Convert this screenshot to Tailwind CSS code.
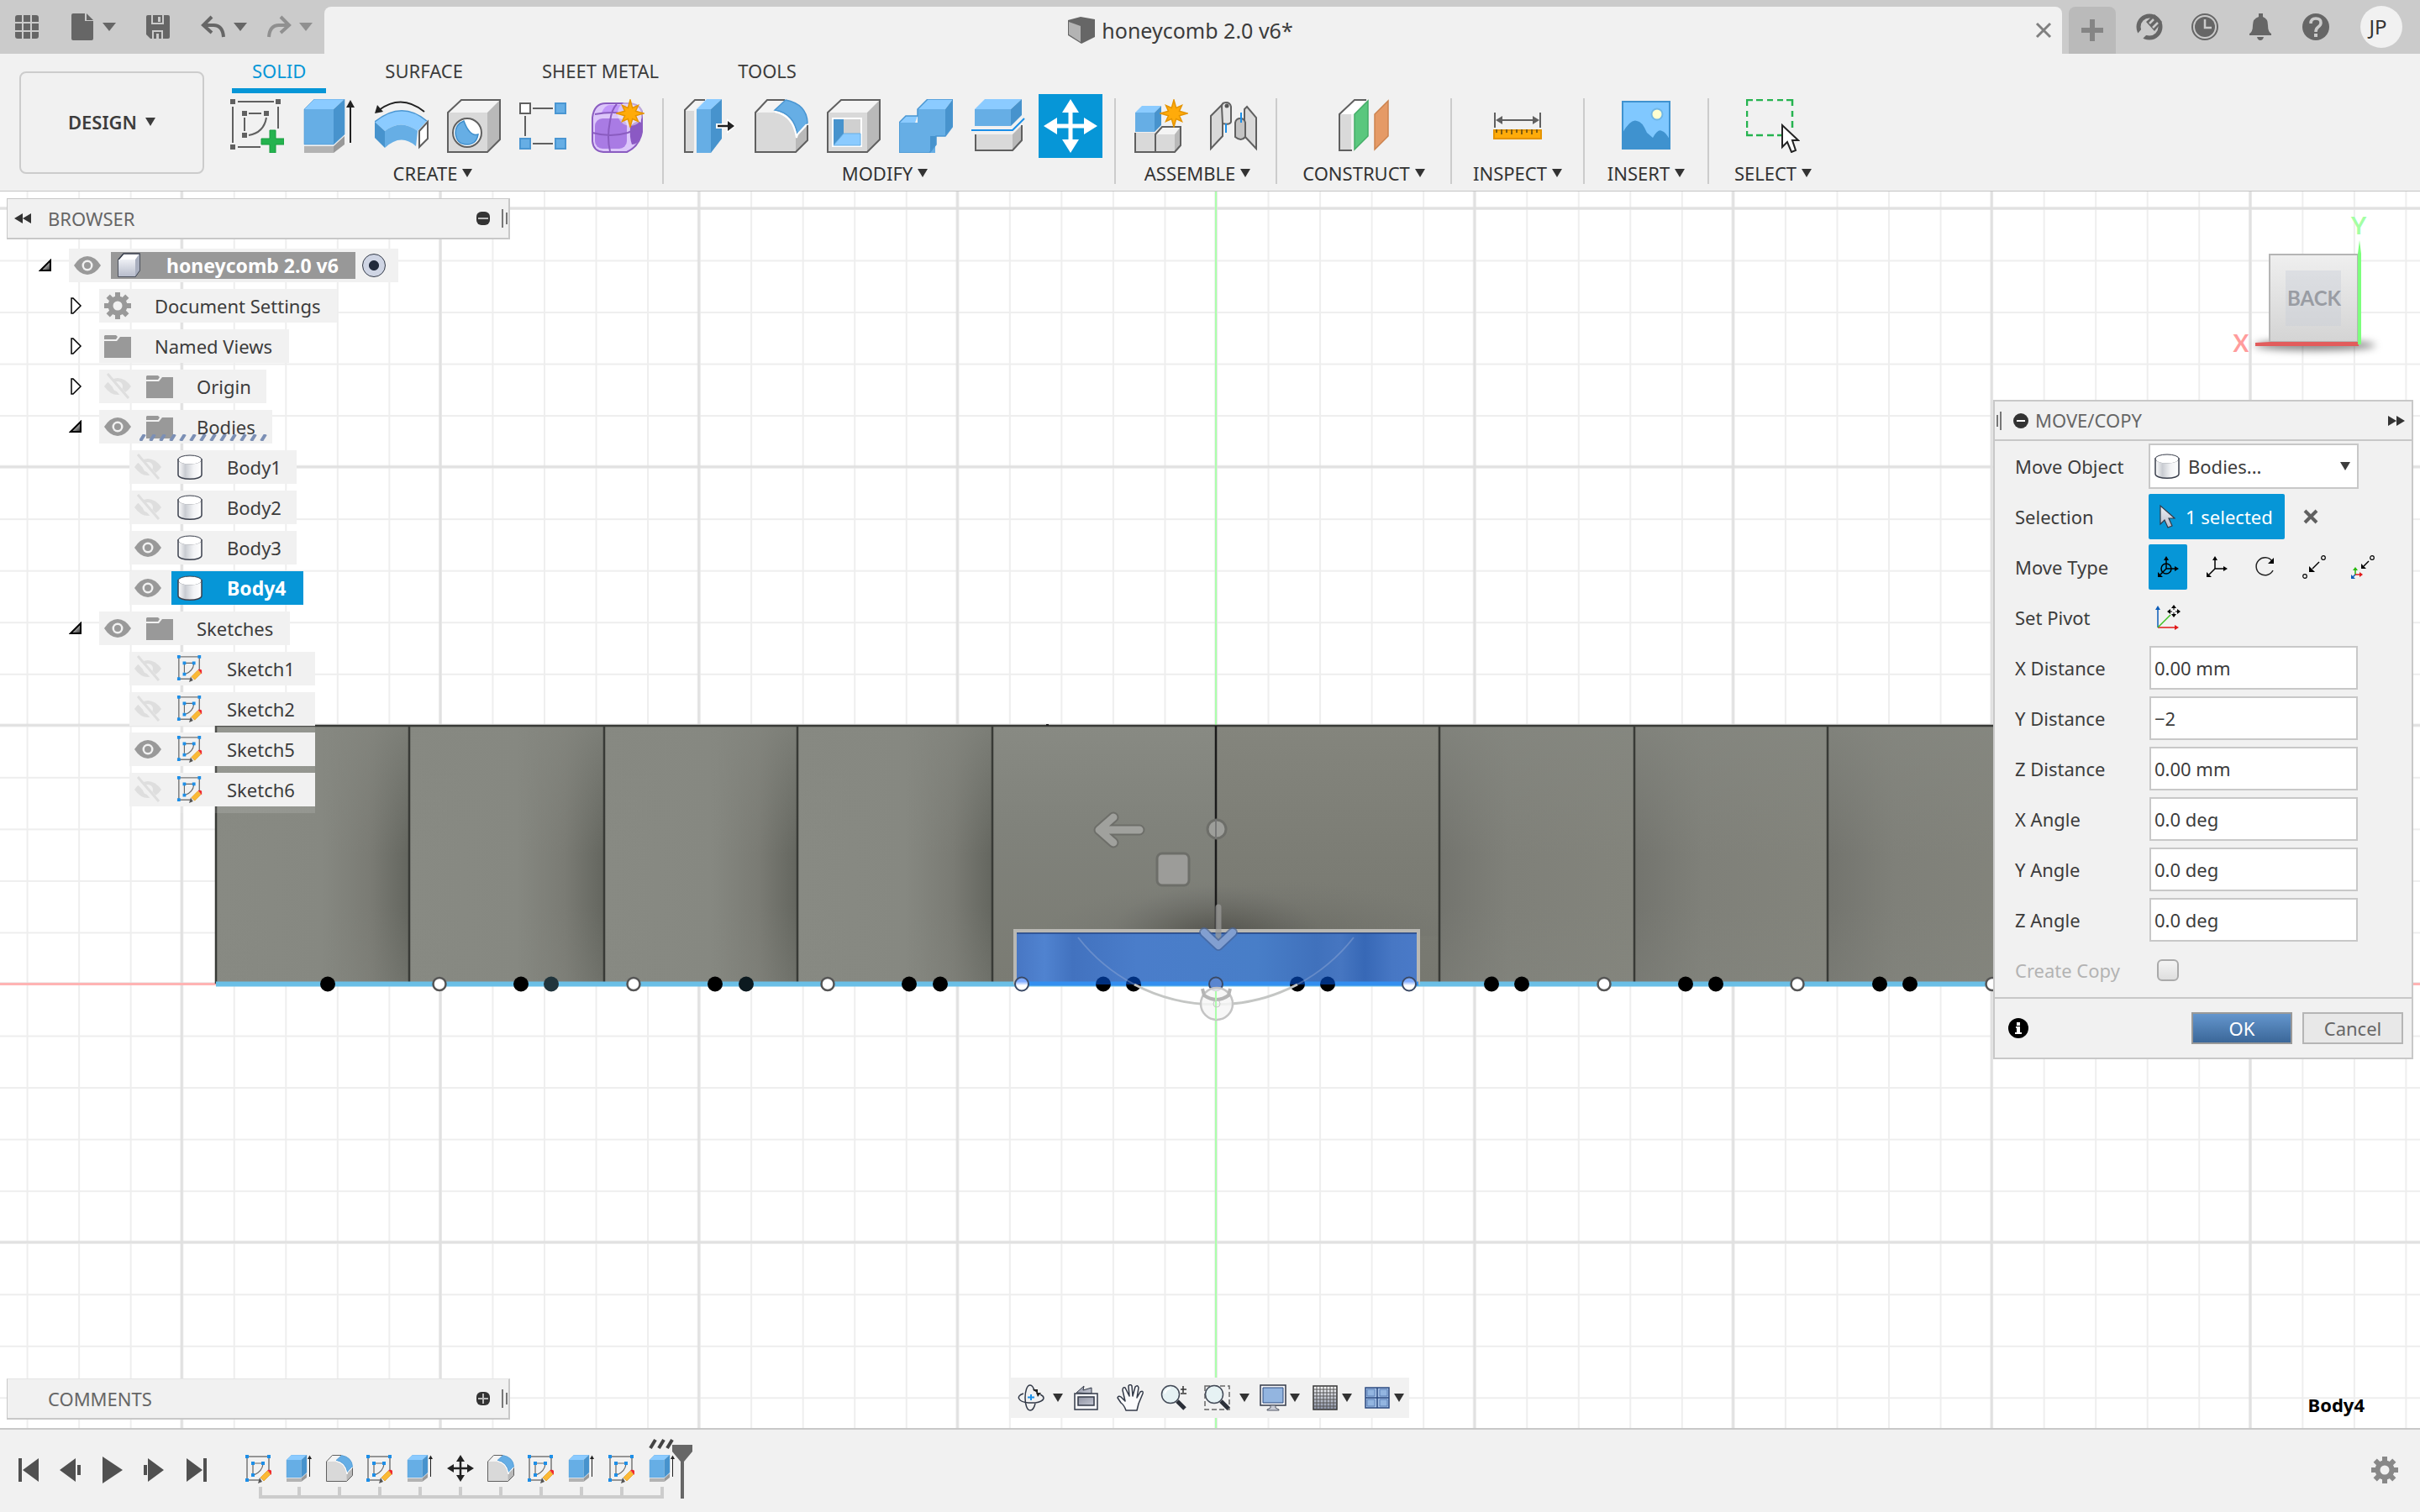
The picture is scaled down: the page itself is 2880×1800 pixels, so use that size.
<!DOCTYPE html>
<html lang="en">
<head>
  <meta charset="UTF-8" />
  <meta name="viewport" content="width=device-width, initial-scale=1.0" />
  <title>honeycomb 2.0 v6*</title>
  <script src="https://cdn.jsdelivr.net/npm/@tailwindcss/browser@4"></script>
</head>
<body class="h-screen flex flex-col overflow-hidden bg-white font-['Noto_Sans',sans-serif] text-[22px] leading-7 text-[#3c3c3c]">

  <!-- shared icons -->
  <svg class="absolute w-0 h-0">
    <linearGradient id="cyl" x1="0" x2="1"><stop offset="0" stop-color="#fff"/><stop offset=".3" stop-color="#c9ccd2"/><stop offset=".65" stop-color="#f2f3f5"/><stop offset="1" stop-color="#fff"/></linearGradient>
    <linearGradient id="steel" x1="0" y1="0" x2="0" y2="1"><stop offset="0" stop-color="#eef0f5"/><stop offset="1" stop-color="#b7bccb"/></linearGradient>
    <linearGradient id="steelDark" x1="0" y1="0" x2="1" y2="1"><stop offset="0" stop-color="#8f93a3"/><stop offset="1" stop-color="#c3c6d2"/></linearGradient>
    <linearGradient id="tri" x1="0" y1="0" x2="1" y2="1"><stop offset=".4" stop-color="#ccc"/><stop offset="1" stop-color="#222"/></linearGradient>
    <linearGradient id="gridFade" x1="0" y1="0" x2="0" y2="1"><stop offset="0" stop-color="#fff"/><stop offset="1" stop-color="#8b93a8"/></linearGradient>
    <symbol id="caret" viewBox="0 0 12 10"><path d="M0 0h12L6 10z" fill="currentColor"/></symbol>
    <symbol id="eye" viewBox="0 0 32 24"><path d="M0 12Q7 1 16 1t16 11q-7 11-16 11T0 12z" fill="#999"/><circle cx="16" cy="12" r="6.500" fill="#f1f1f1"/><circle cx="16" cy="12" r="4" fill="#999"/></symbol>
    <symbol id="eye-off" viewBox="0 0 32 32"><path d="M0 16Q7 6 16 6t16 10q-7 10-16 10T0 16z" fill="#dedede"/><circle cx="16" cy="16" r="6" fill="#f1f1f1"/><path d="M2 3l26 28" stroke="#f1f1f1" stroke-width="7"/><path d="M4 1l25 29" stroke="#dedede" stroke-width="3"/></symbol>
    <symbol id="folder" viewBox="0 0 32 32"><path d="M1 3h13l2 2-2 3H0V4z" fill="#999"/><path d="M0 10h15l4-5h13v25H0z" fill="#999"/></symbol>
    <symbol id="gear" viewBox="-16 -16 32 32"><g fill="currentColor"><path d="M-3-16h6v32h-6zM-16-3h32v6h-32z"/><path d="M-3-16h6v32h-6zM-16-3h32v6h-32z" transform="rotate(45)"/><circle r="11.500"/></g><circle r="5.500" fill="#f1f1f1"/></symbol>
    <symbol id="cylinder" viewBox="0 0 32 32"><path d="M2 7v18c0 7 28 7 28 0V7z" fill="url(#cyl)" stroke="#3a3f4c" stroke-width="1.500"/><ellipse cx="16" cy="7" rx="14" ry="5" fill="#fbfbfb" stroke="#3a3f4c" stroke-width="1"/><ellipse cx="16" cy="8" rx="13" ry="4.500" fill="#fff"/></symbol>
    <symbol id="open" viewBox="0 0 16 16"><path d="M2 14L14 2v12z" fill="url(#tri)" stroke="#000" stroke-width="2"/></symbol>
    <symbol id="closed" viewBox="0 0 16 22"><path d="M3 2h2l9 9-9 9H3z" fill="#fff" stroke="#000" stroke-width="1.500"/></symbol>
    <symbol id="sketch" viewBox="0 0 32 34">
      <path d="M3 2h25M2 3v27M28 3v16M3 30h15" fill="none" stroke="#777" stroke-width="1.500"/>
      <path d="M9 11v11M9 10h12M21 11q-1 9-11 13" fill="none" stroke="#666" stroke-width="1.200"/>
      <path d="M0 0h4v4H0zM26 0h4v4h-4zM0 28h4v4H0zM7 8h4v4H7zM19 8h4v4h-4zM7 22h4v4H7z" fill="#1d8fe8"/>
      <path d="M17 27l3 5-5 2z" fill="#555"/><path d="M18 27l8-8 4 4-8 8z" fill="#fbb935" stroke="#e09a1c" stroke-width=".700"/><path d="M26 18q4-1 5 1v5z" fill="#f0292e"/>
    </symbol>
    <symbol id="star" viewBox="-17 -17 34 34"><path d="M0-16 2.700-6.500 9.500-9.500 6.500-2.700 16 0 6.500 2.700 9.500 9.500 2.700 6.500 0 16-2.700 6.500-9.500 9.500-6.500 2.700-16 0-6.500-2.700-9.500-9.500-2.700-6.500z" fill="#ffab0a" stroke="#e59400" stroke-width="1.500"/></symbol>
    <symbol id="extrude" viewBox="0 0 64 64">
      <path d="M2 12h35v42H2z" fill="#66aee5"/><path d="M2 12L14 0h36L37 12z" fill="#8bcbff"/><path d="M37 12L50 0v42L37 54z" fill="#4793cd"/>
      <path d="M2 12L14 0h36v42L37 54H2z" fill="none" stroke="#4a96d2" stroke-opacity=".6"/>
      <path d="M2 56h35v8H2z" fill="#b3b3b3"/><path d="M37 56l13-12v10L37 64z" fill="#999"/>
      <path d="M57 52V8" stroke="#222" stroke-width="2"/><path d="M52 10l5-9 5 9z" fill="#222"/>
    </symbol>
    <symbol id="fillet" viewBox="0 0 64 64">
      <path d="M1 16L15 1h21L24 14z" fill="#f4f4f4"/><path d="M1 16h23q22 5 26 30l-1 17H1z" fill="#d9d9d9"/><path d="M49 46l14-15v18L49 63z" fill="#b9b9b9"/>
      <path d="M36 1H15L1 16v47h48l14-14V31" fill="none" stroke="#606060" stroke-width="2"/>
      <path d="M24 13L37 1q25 5 26 27L51 42Q47 17 24 13z" fill="#66aee5" stroke="#4a96d2" stroke-width="1.500"/><path d="M24 15q22 4 26 31l1-4L62 30" fill="none" stroke="#fff" stroke-width="2"/>
    </symbol>
    <symbol id="move" viewBox="-32 -32 64 64"><g fill="currentColor"><path d="M-2.500-18h5v36h-5zM-18-2.500h36v5h-36z"/><path d="M0-32l10 16h-20zM0 32l10-16h-20zM-32 0l16-10v20zM32 0L16-10v20z"/></g></symbol>
  </svg>

  <!-- title bar -->
  <header class="h-16 shrink-0 bg-[#cbcbcb] flex items-stretch text-[#666]">
    <div class="w-[386px] flex items-center pl-4">
      <button aria-label="Data panel" class="w-8"><svg class="w-8 h-8" viewBox="0 0 32 32"><path d="M2 5q0-3 3-3h5v8H2zM12 2h8v8h-8zM22 2h5q3 0 3 3v5h-8zM2 12h8v8H2zM12 12h8v8h-8zM22 12h8v8h-8zM2 22h8v8H5q-3 0-3-3zM12 22h8v8h-8zM22 22h8v5q0 3-3 3h-5z" fill="currentColor"/></svg></button>
      <button aria-label="File" class="ml-[34px] flex items-center gap-2"><svg class="w-8 h-8" viewBox="0 0 32 32"><path d="M5 0h14v9h10v21q0 2-2 2H5q-2 0-2-2V2q0-2 2-2z" fill="currentColor"/><path d="M21 0l8 8h-8z" fill="currentColor"/></svg><svg class="w-4 h-[10px]" viewBox="0 0 16 10"><path d="M0 0h16L8 10z" fill="currentColor"/></svg></button>
      <button aria-label="Save" class="ml-[34px]"><svg class="w-8 h-8" viewBox="0 0 32 32"><path d="M2 4q0-2 2-2h24q2 0 2 2v24q0 2-2 2H7l-5-5z" fill="currentColor"/><path d="M9 2v10h13V2M10 30v-9h11v9" fill="none" stroke="#cbcbcb" stroke-width="2"/><path d="M14 24h3v6h-3z" fill="#cbcbcb"/><path d="M16 4h3v6h-3z" fill="#cbcbcb"/></svg></button>
      <button aria-label="Undo" class="ml-[34px] flex items-center gap-2"><svg class="w-8 h-8" viewBox="0 0 32 32"><path d="M14 4L4 14l10 9M4 14h12q11 0 12 14" fill="none" stroke="currentColor" stroke-width="4"/></svg><svg class="w-4 h-[10px]" viewBox="0 0 16 10"><path d="M0 0h16L8 10z" fill="currentColor"/></svg></button>
      <button aria-label="Redo" class="ml-[22px] flex items-center gap-2 text-[#909090]"><svg class="w-8 h-8" viewBox="0 0 32 32"><path d="M18 4l10 10-10 9M28 14H16Q5 14 4 28" fill="none" stroke="currentColor" stroke-width="4"/></svg><svg class="w-4 h-[10px]" viewBox="0 0 16 10"><path d="M0 0h16L8 10z" fill="currentColor"/></svg></button>
    </div>
    <div class="flex-1 mt-2 bg-[#f1f1f1] rounded-t-lg flex items-center">
      <div class="flex-1 flex items-center justify-center gap-1.5 text-[25px] text-[#3c3c3c]">
        <svg class="w-9 h-9" viewBox="0 0 36 36"><path d="M2 6l15-4 17 3v21L18 34 2 24z" fill="#666"/><path d="M3 8l14 5v19L3 23z" fill="#b3b3b3"/></svg>
        <h1>honeycomb 2.0 v6*</h1>
      </div>
      <button aria-label="Close tab" class="mr-3"><svg class="w-5 h-5" viewBox="0 0 20 20"><path d="M2 2l16 16M18 2L2 18" stroke="#808080" stroke-width="3"/></svg></button>
    </div>
    <button aria-label="New tab" class="ml-2 mt-2 w-14 bg-[#bababa] rounded-t-lg flex items-center justify-center"><svg class="w-[26px] h-[26px]" viewBox="0 0 26 26"><path d="M13 0v26M0 13h26" stroke="#858585" stroke-width="6"/></svg></button>
    <div class="flex items-center gap-[34px] pl-6 pr-[21px]">
      <button aria-label="Extensions"><svg class="w-8 h-8" viewBox="0 0 32 32"><circle cx="16" cy="16" r="13" fill="none" stroke="currentColor" stroke-width="5"/><path d="M1 27l6-7 3 3-6 8z" fill="#cbcbcb"/><path d="M1 25l7-8q-2-8 6-9l9 10q-2 7-9 6l-7 7z" fill="#cbcbcb"/><path d="M8 18q0-6 6-10L25 20q-5 6-12 4l-5 3q-4 1-3-3z" fill="#cbcbcb"/><path d="M12 10L22 1l9 9-9 11z" fill="currentColor"/><path d="M16 12l5-5M20 17l6-6" stroke="#cbcbcb" stroke-width="2.500"/></svg></button>
      <button aria-label="Job status"><svg class="w-8 h-8" viewBox="0 0 32 32"><circle cx="16" cy="16" r="15" fill="none" stroke="currentColor" stroke-width="2"/><circle cx="16" cy="16" r="12" fill="currentColor"/><path d="M16 7v10h8" fill="none" stroke="#cbcbcb" stroke-width="2.500"/></svg></button>
      <button aria-label="Notifications"><svg class="w-8 h-8" viewBox="0 0 32 32"><path d="M14 0h5v4q6 2 6 10 0 8 4 10v2H3v-2q4-2 4-10 0-8 7-10zM12 28h8q-1 4-4 4t-4-4z" fill="currentColor"/></svg></button>
      <button aria-label="Help"><svg class="w-8 h-8" viewBox="0 0 32 32"><circle cx="16" cy="16" r="16" fill="currentColor"/><path d="M10 12q0-6 6-6t6 5q0 3-3 5-3 2-3 6" fill="none" stroke="#cbcbcb" stroke-width="3.500"/><path d="M14 24h4v4h-4z" fill="#cbcbcb"/></svg></button>
      <button class="ml-[3px] pr-2 w-[50px] h-[50px] rounded-full bg-[#f1f1f1] text-2xl text-[#333]">JP</button>
    </div>
  </header>

  <!-- ribbon -->
  <div class="h-[164px] shrink-0 bg-[#f1f1f1] border-b border-[#c4c4c4] flex">
    <button class="ml-[23px] mt-[21px] w-[220px] h-[122px] pb-0.5 border-2 border-[#ccc] rounded-lg font-semibold flex items-center justify-center gap-2.5">DESIGN <svg class="w-3 h-2.5"><use href="#caret"/></svg></button>
    <div class="ml-[19px]">
      <nav class="h-12 flex gap-[46px] pl-3.5">
        <a href="#" class="h-[47px] px-6 pt-1.5 border-b-6 border-[#0696d7] text-[#0696d7]">SOLID</a>
        <a href="#" class="h-[47px] px-6 pt-1.5">SURFACE</a>
        <a href="#" class="h-[47px] px-6 pt-1.5">SHEET METAL</a>
        <a href="#" class="h-[47px] px-6 pt-1.5">TOOLS</a>
      </nav>
      <div class="flex text-[#333]">
        <section class="pl-[6px] pr-3.5">
          <div class="flex gap-2.5">
            <button aria-label="Create sketch" class="w-[76px] h-[76px] p-1.5"><svg viewBox="0 0 64 64">
              <g fill="none" stroke="#606060" stroke-width="2"><path d="M9 3h43M3 9v43M57 9v26M9 57h27M22 17h15M17 22v16M43 22q-3 18-21 21"/></g>
              <path d="M0 0h6v6H0zM54 0h6v6h-6zM0 54h6v6H0zM14 14h6v6h-6zM40 14h6v6h-6zM14 40h6v6h-6z" fill="#606060"/>
              <path d="M47 37h7v10h10v7H54v10h-7V54H37v-7h10z" fill="#25b34f" stroke="#179c3f"/></svg></button>
            <button aria-label="Extrude" class="w-[76px] h-[76px] p-1.5"><svg viewBox="0 0 64 64"><use href="#extrude"/></svg></button>
            <button aria-label="Revolve" class="w-[76px] h-[76px] p-1.5"><svg viewBox="0 0 64 64">
              <path d="M59 15Q32-7 5 13" fill="none" stroke="#222" stroke-width="2"/><path d="M0 17L3 7l7 8z" fill="#222"/>
              <path d="M0 27Q32 1 62 26L51 38Q31 23 12 38z" fill="#8bcbff"/><path d="M0 27l12 11v20L0 46z" fill="#4793cd"/><path d="M12 38Q31 23 51 38l-2 18Q31 40 12 58z" fill="#66aee5"/>
              <path d="M0 27Q32 1 62 26" fill="none" stroke="#4a96d2" stroke-width="1.500"/><path d="M53 38l10-11v20L53 57z" fill="#fff" stroke="#606060" stroke-width="2"/></svg></button>
            <button aria-label="Hole" class="w-[76px] h-[76px] p-1.5"><svg viewBox="0 0 64 64">
              <path d="M1 16L17 1h46L48 16z" fill="#f4f4f4"/><path d="M1 16h47v47H1z" fill="#d9d9d9"/><path d="M48 16L63 1v47L48 63z" fill="#b9b9b9"/><path d="M1 16L17 1h46v47L48 63H1z" fill="none" stroke="#606060" stroke-width="2"/>
              <circle cx="24" cy="40" r="17" fill="#fff" stroke="#606060" stroke-width="2"/><path d="M20 26Q10 30 10 40q1 14 14 14 11 0 13-12-10 3-17-16z" fill="#66aee5" stroke="#3f8ecb" stroke-width="1.500"/></svg></button>
            <button aria-label="Pattern" class="w-[76px] h-[76px] p-1.5"><svg viewBox="0 0 64 64">
              <path d="M16 11h24M7 20v24M16 53h24" stroke="#606060" stroke-width="2"/><path d="M1 5h12v12H1z" fill="#fff" stroke="#606060" stroke-width="2"/>
              <path d="M43 5h12v12H43zM1 47h12v12H1zM43 47h12v12H43z" fill="#66aee5" stroke="#4a96d2" stroke-width="2"/></svg></button>
            <button aria-label="Create form" class="w-[76px] h-[76px] p-1.5"><svg viewBox="0 0 64 64">
              <path d="M1 22Q3 5 17 5h26q14 0 17 10v24Q57 56 42 63H14Q2 62 1 50z" fill="#dcc6fa" stroke="#8a5cc0" stroke-width="2"/>
              <path d="M12 16Q16 7 22 7h20l-6 10z" fill="#c195fa"/><rect x="4" y="23" width="38" height="36" rx="9" fill="#a97be4"/><path d="M46 32q8-8 13-4v16q-4 10-11 10-3-8-2-22z" fill="#8b59c4"/>
              <path d="M22 62q-4-16 0-36 2-14 8-20M1 40q22 6 42 0 12-4 17-12M4 18q22-4 42 0" fill="none" stroke="#8a5cc0" stroke-width="2"/>
              <circle cx="46" cy="17" r="15" fill="#f1f1f1" fill-opacity=".5"/><use href="#star" x="29" y="0" width="34" height="34"/></svg></button>
          </div>
          <button class="mt-1 w-full pr-3 flex items-center justify-center gap-1.5 leading-7">CREATE <svg class="w-3 h-2.5"><use href="#caret"/></svg></button>
        </section>
        <div class="w-0.5 h-[102px] mt-[5px] bg-[#ccc]"></div>
        <section class="pl-4 pr-3.5">
          <div class="flex gap-2.5">
            <button aria-label="Press pull" class="w-[76px] h-[76px] p-1.5"><svg viewBox="0 0 64 64">
              <path d="M3 14h11v49H3z" fill="#d9d9d9"/><path d="M3 13L15 1h11L14 13z" fill="#f4f4f4"/><path d="M13 63H3V13L15 1h12" fill="none" stroke="#606060" stroke-width="2"/>
              <path d="M17 12h17v52H17z" fill="#66aee5"/><path d="M17 12L29 0h18L34 12z" fill="#8bcbff"/><path d="M34 12L47 0v47L34 64z" fill="#4793cd"/>
              <path d="M40 29h13v-6l11 9-11 9v-6H40z" fill="#fff"/><path d="M42 32h13" stroke="#222" stroke-width="2.500"/><path d="M54 26l8 6-8 6z" fill="#222"/></svg></button>
            <button aria-label="Fillet" class="w-[76px] h-[76px] p-1.5"><svg viewBox="0 0 64 64"><use href="#fillet"/></svg></button>
            <button aria-label="Shell" class="w-[76px] h-[76px] p-1.5"><svg viewBox="0 0 64 64">
              <path d="M1 16L17 1h46L48 16z" fill="#f4f4f4"/><path d="M1 16h47v47H1z" fill="#d9d9d9"/><path d="M48 16L63 1v47L48 63z" fill="#b9b9b9"/><path d="M1 16L17 1h46v47L48 63H1z" fill="none" stroke="#606060" stroke-width="2"/>
              <path d="M6 22h36v35H6z" fill="#fff"/><path d="M20 24h20v18H20z" fill="#d0d0d0"/><path d="M8 24h12v18L8 55z" fill="#4793cd"/><path d="M8 55l12-14h20v14z" fill="#8bcbff" stroke="#66aee5"/></svg></button>
            <button aria-label="Combine" class="w-[76px] h-[76px] p-1.5"><svg viewBox="0 0 64 64">
              <path d="M0 28h22V12h34v32H43v20H0z" fill="#66aee5"/><path d="M22 12L34 0h30l-9 12zM0 28l8-8h14l-3 8z" fill="#8bcbff"/><path d="M55 12l9-12v32l-9 12zM37 44h7v10l-7 10z" fill="#4793cd"/>
              <path d="M0 28l8-8h14v-8L34 0h30v32l-9 12H44v10l-8 10H0z" fill="none" stroke="#4a96d2" stroke-width="1.500"/></svg></button>
            <button aria-label="Split body" class="w-[76px] h-[76px] p-1.5"><svg viewBox="0 0 64 64">
              <path d="M4 12h43v20H4z" fill="#66aee5"/><path d="M4 12L16 0h44L47 12z" fill="#8bcbff"/><path d="M47 12L60 0v19L47 32z" fill="#4793cd"/>
              <path d="M0 37h49l14-14" fill="none" stroke="#1b8fe8" stroke-width="2"/><path d="M5 42h44v19H5z" fill="#d9d9d9"/><path d="M49 42l11-11v18L49 61z" fill="#b9b9b9"/><path d="M5 42v19h44l11-12V31" fill="none" stroke="#606060" stroke-width="2"/></svg></button>
            <button aria-label="Move" class="w-[76px] h-[76px] p-1.5 bg-[#0696d7] text-white"><svg viewBox="0 0 64 64"><use href="#move"/></svg></button>
          </div>
          <button class="mt-1 w-full pr-3 flex items-center justify-center gap-1.5 leading-7">MODIFY <svg class="w-3 h-2.5"><use href="#caret"/></svg></button>
        </section>
        <div class="w-0.5 h-[102px] mt-[5px] bg-[#ccc]"></div>
        <section class="pl-4 pr-3">
          <div class="flex gap-2.5">
            <button aria-label="New component" class="w-[76px] h-[76px] p-1.5"><svg viewBox="0 0 64 64">
              <path d="M1 40h24v23H1zM25 42h23v21H25z" fill="#d9d9d9"/><path d="M25 42l8-9h22l-7 9z" fill="#f4f4f4"/><path d="M48 42l7-9v22l-7 8z" fill="#b9b9b9"/><path d="M1 40v23h47l7-8V33H33l-8 9v21" fill="none" stroke="#606060" stroke-width="2"/>
              <path d="M1 16h23v23H1z" fill="#66aee5"/><path d="M1 16l8-8h23l-8 8z" fill="#8bcbff"/><path d="M24 16l8-8v23l-8 8z" fill="#4793cd"/><circle cx="47" cy="17" r="13" fill="#f1f1f1"/><use href="#star" x="30" y="0" width="34" height="34"/></svg></button>
            <button aria-label="Joint" class="w-[76px] h-[76px] p-1.5"><svg viewBox="0 0 64 64">
              <path d="M5 20L19 6v38L5 59z" fill="#d9d9d9" stroke="#606060" stroke-width="2"/><path d="M18 9q0-5 5-5t6 5v18q-1 4-10 2z" fill="#e4e4e4" stroke="#606060" stroke-width="2"/><circle cx="24" cy="8" r="2.500" fill="#555"/><path d="M23 29v11" stroke="#1b8fe8" stroke-width="2"/>
              <path d="M45 12l3-3 11 13v37L45 44z" fill="#d9d9d9" stroke="#606060" stroke-width="2"/><path d="M34 28q1-5 6-5t6 5v17q-5 6-12 0z" fill="#c4c4c4" stroke="#606060" stroke-width="2"/><path d="M41 16v12" stroke="#1b8fe8" stroke-width="2"/></svg></button>
          </div>
          <button class="mt-1 w-full flex items-center justify-center gap-1.5 leading-7">ASSEMBLE <svg class="w-3 h-2.5"><use href="#caret"/></svg></button>
        </section>
        <div class="w-0.5 h-[102px] mt-[5px] bg-[#ccc]"></div>
        <section class="w-[206px] flex flex-col items-center">
          <button aria-label="Offset plane" class="w-[76px] h-[76px] p-1.5"><svg viewBox="0 0 64 64">
            <path d="M3 18h14v43H3z" fill="#d9d9d9"/><path d="M3 18L21 1h14L20 18z" fill="#fff"/><path d="M18 61H3V18L21 1h14" fill="none" stroke="#606060" stroke-width="2"/>
            <path d="M21 18L37 2v42L21 60z" fill="#5ac77e" stroke="#43ad67" stroke-width="1.500"/><path d="M45 18L61 2v42L45 60z" fill="#e59a66" stroke="#cb834f" stroke-width="1.500"/></svg></button>
          <button class="mt-1 flex items-center gap-1.5 leading-7">CONSTRUCT <svg class="w-3 h-2.5"><use href="#caret"/></svg></button>
        </section>
        <div class="w-0.5 h-[102px] mt-[5px] bg-[#ccc]"></div>
        <section class="w-[156px] flex flex-col items-center">
          <button aria-label="Measure" class="w-[76px] h-[76px] p-1.5"><svg viewBox="0 0 64 64">
            <path d="M5 16v18M59 16v18M10 25h44" stroke="#606060" stroke-width="2"/><path d="M6 25l8-5v10zM58 25l-8-5v10z" fill="#606060"/>
            <path d="M4 37h56v10H4z" fill="#ffab0a" stroke="#e59400" stroke-width="2"/><path d="M7 36v4M13 36v6M19 36v4M25 36v6M31 36v4M37 36v6M43 36v4M49 36v6M55 36v4" stroke="#805c10" stroke-width="2"/></svg></button>
          <button class="mt-1 flex items-center gap-1.5 leading-7">INSPECT <svg class="w-3 h-2.5"><use href="#caret"/></svg></button>
        </section>
        <div class="w-0.5 h-[102px] mt-[5px] bg-[#ccc]"></div>
        <section class="w-[146px] flex flex-col items-center">
          <button aria-label="Insert canvas" class="w-[76px] h-[76px] p-1.5"><svg viewBox="0 0 64 64">
            <path d="M4 3h56v56H4z" fill="#80c8ff" stroke="#3f92cf" stroke-width="2"/><circle cx="45" cy="18" r="6.500" fill="#ffffd0" stroke="#70b6e6" stroke-width="2"/><path d="M4 40q10-17 17-14 6 0 12 14l7 6q6-11 11-8 4 1 9 10v11H4z" fill="#3f92cf"/></svg></button>
          <button class="mt-1 flex items-center gap-1.5 leading-7">INSERT <svg class="w-3 h-2.5"><use href="#caret"/></svg></button>
        </section>
        <div class="w-0.5 h-[102px] mt-[5px] bg-[#ccc]"></div>
        <section class="w-[152px] flex flex-col items-center">
          <button aria-label="Select" class="w-[76px] h-[76px] p-1.5"><svg viewBox="0 0 64 64">
            <path d="M8 1H1v7M1 14v7M1 26v8M1 38v5h7M12 1h8M25 1h7M37 1h7M48 1h7v7M55 14v7M55 26v8M12 43h8M25 43h8M37 43h5" fill="none" stroke="#25b34f" stroke-width="2.500"/>
            <path d="M43 31v26l6-6 5 12 5-2-4-12h7z" fill="#fff" stroke="#222" stroke-width="2"/></svg></button>
          <button class="mt-1 flex items-center gap-1.5 leading-7">SELECT <svg class="w-3 h-2.5"><use href="#caret"/></svg></button>
        </section>
      </div>
    </div>
  </div>

  <!-- viewport -->
  <main class="flex-1 relative overflow-hidden">
    <svg class="absolute inset-0 w-full h-full" viewBox="0 228 2880 1472" preserveAspectRatio="xMidYMid slice">
      <defs>
        <pattern id="minor" x="1447" y="1171" width="61.540" height="61.540" patternUnits="userSpaceOnUse"><path d="M0 0h61.540M0 0v61.540" stroke="#eeeeee" stroke-width="4"/></pattern>
        <pattern id="major" x="1445" y="1169" width="307.700" height="307.700" patternUnits="userSpaceOnUse"><path d="M0 2h308M2 0v308" stroke="#e0e0e0" stroke-width="3"/></pattern>
        <linearGradient id="cellL" x1="0" x2="1"><stop offset="0" stop-color="#888a83"/><stop offset=".55" stop-color="#868881"/><stop offset=".8" stop-color="#7a7b74"/><stop offset="1" stop-color="#64665f"/></linearGradient>
        <linearGradient id="cellR" x1="0" x2="1"><stop offset="0" stop-color="#73746e"/><stop offset=".35" stop-color="#7f8079"/><stop offset="1" stop-color="#83847c"/></linearGradient>
        <linearGradient id="topFade" x1="0" y1="0" x2="0" y2="1"><stop offset="0" stop-color="#868881" stop-opacity=".7"/><stop offset=".5" stop-color="#868881" stop-opacity="0"/><stop offset=".7" stop-color="#868881" stop-opacity="0"/><stop offset="1" stop-color="#868881" stop-opacity=".3"/></linearGradient>
        <linearGradient id="midL" x1="0" y1="0" x2="0" y2="1"><stop offset="0" stop-color="#888a83"/><stop offset=".4" stop-color="#80827b"/><stop offset="1" stop-color="#7a7b73"/></linearGradient>
        <linearGradient id="midR" x1="0" y1="0" x2="0" y2="1"><stop offset="0" stop-color="#84857d"/><stop offset=".5" stop-color="#7c7d75"/><stop offset="1" stop-color="#777870"/></linearGradient>
        <radialGradient id="dark"><stop offset="0" stop-color="#4a4a45" stop-opacity=".9"/><stop offset=".5" stop-color="#55554f" stop-opacity=".4"/><stop offset="1" stop-color="#666" stop-opacity="0"/></radialGradient>
        <linearGradient id="blue" x1="0" x2="1"><stop offset="0" stop-color="#4877c4"/><stop offset=".07" stop-color="#5083d0"/><stop offset=".14" stop-color="#4272bf"/><stop offset=".3" stop-color="#4a7dca"/><stop offset=".6" stop-color="#487ec8"/><stop offset=".75" stop-color="#4071bc"/><stop offset=".81" stop-color="#4676c1"/><stop offset=".87" stop-color="#3768b6"/><stop offset=".94" stop-color="#4777c4"/><stop offset="1" stop-color="#4a7ac8"/></linearGradient>
        <linearGradient id="halfDot" x1="0" y1="0" x2="0" y2="1"><stop offset=".5" stop-color="#00307f"/><stop offset=".5" stop-color="#000"/></linearGradient>
        <linearGradient id="halfOpen" x1="0" y1="0" x2="0" y2="1"><stop offset=".3" stop-color="#7fabff"/><stop offset=".6" stop-color="#fff"/></linearGradient>
        <linearGradient id="cube" x1="0" y1="0" x2="0" y2="1"><stop offset="0" stop-color="#efefef"/><stop offset="1" stop-color="#d4d4d4"/></linearGradient>
        <filter id="soft" x="-20%" y="-100%" width="140%" height="300%"><feGaussianBlur stdDeviation="5"/></filter>
      </defs>
      <rect y="228" width="2880" height="1472" fill="url(#minor)"/>
      <rect y="228" width="2880" height="1472" fill="url(#major)"/>
      <path d="M0 1171.500h2880" stroke="#ffb3b3" stroke-width="3"/>
      <path d="M1447 228v1472" stroke="#acffac" stroke-width="2"/>

      <!-- body faces -->
      <rect x="257" y="864" width="230" height="307" fill="url(#cellL)"/><rect x="487" y="864" width="232" height="307" fill="url(#cellL)"/><rect x="719" y="864" width="230" height="307" fill="url(#cellL)"/><rect x="949" y="864" width="232" height="307" fill="url(#cellL)"/>
      <rect x="1181" y="864" width="266" height="307" fill="url(#midL)"/><rect x="1447" y="864" width="266" height="307" fill="url(#midR)"/>
      <rect x="1713" y="864" width="232" height="307" fill="url(#cellR)"/><rect x="1945" y="864" width="230" height="307" fill="url(#cellR)"/><rect x="2175" y="864" width="230" height="307" fill="url(#cellR)"/>
      <path d="M257 864h924v307H257zM1713 864h692v307h-692z" fill="url(#topFade)"/>
      <svg x="1181" y="864" width="532" height="250" viewBox="1181 864 532 250"><ellipse cx="1447" cy="1120" rx="130" ry="66" fill="url(#dark)"/><ellipse cx="1490" cy="1125" rx="260" ry="80" fill="url(#dark)" opacity=".5"/></svg>
      <path d="M257 1171V864h2148M487 864v307M719 864v307M949 864v307M1181 864v307M1713 864v307M1945 864v307M2175 864v307" fill="none" stroke="#383a36" stroke-width="2.500"/>
      <path d="M1447 864v246" stroke="#1a1a1a" stroke-width="2.500"/>
      <path d="M1245 862h3v2h-3z" fill="#222"/>
      <path d="M257 1171.500h2148" stroke="#6abfe6" stroke-width="6"/>

      <!-- selected body -->
      <path d="M1208 1172v-64h480v64" fill="none" stroke="#b9b8b3" stroke-width="4"/>
      <rect x="1210" y="1111" width="476" height="59" fill="url(#blue)"/>
      <path d="M1210 1111h476" stroke="#244a90" stroke-width="1.500"/>
      <path d="M1208 1171h480" stroke="#338ff0" stroke-width="5"/>

      <!-- sketch points -->
      <g fill="#000"><circle cx="390" cy="1171.500" r="9"/><circle cx="620" cy="1171.500" r="9"/><circle cx="656" cy="1171.500" r="9" fill="#20343c"/><circle cx="851" cy="1171.500" r="9"/><circle cx="888" cy="1171.500" r="9" fill="#0c1a20"/><circle cx="1082" cy="1171.500" r="9"/><circle cx="1119" cy="1171.500" r="9"/><circle cx="1775" cy="1171.500" r="9"/><circle cx="1811" cy="1171.500" r="9"/><circle cx="2006" cy="1171.500" r="9"/><circle cx="2042" cy="1171.500" r="9"/><circle cx="2237" cy="1171.500" r="9"/><circle cx="2273" cy="1171.500" r="9"/></g>
      <g fill="url(#halfDot)"><circle cx="1313" cy="1171.500" r="9"/><circle cx="1349" cy="1171.500" r="9"/><circle cx="1544" cy="1171.500" r="9"/><circle cx="1580" cy="1171.500" r="9"/></g>
      <g fill="#fff" stroke="#555" stroke-width="2.500"><circle cx="523" cy="1171.500" r="7.500"/><circle cx="754" cy="1171.500" r="7.500"/><circle cx="985" cy="1171.500" r="7.500"/><circle cx="1909" cy="1171.500" r="7.500"/><circle cx="2139" cy="1171.500" r="7.500"/><circle cx="2371" cy="1171.500" r="7.500"/></g>
      <g fill="url(#halfOpen)" stroke="#3b4a66" stroke-width="2"><circle cx="1216" cy="1171.500" r="8"/><circle cx="1677" cy="1171.500" r="8"/><circle cx="1447" cy="1171.500" r="8" fill="#5a86d0"/></g>

      <!-- manipulator -->
      <path d="M1283 1116A209 209 0 0 0 1350 1172M1544 1172A209 209 0 0 0 1611 1116" fill="none" stroke="#9db2da" stroke-opacity=".4" stroke-width="2"/>
      <path d="M1350 1172A209 209 0 0 0 1544 1172" fill="none" stroke="#c4c6c4" stroke-width="3"/>
      <circle cx="1448" cy="1195" r="19" fill="#f6f6f6" fill-opacity=".85" stroke="#c4c4c4" stroke-width="2.500"/>
      <path d="M1431 1177l2 8q15 10 29 0l2-8" fill="none" stroke="#b5b5b5" stroke-width="4"/>
      <path d="M1447 1180v34" stroke="#acffac" stroke-width="2"/><circle cx="1448" cy="1195" r="4" fill="none" stroke="#c4c4c4"/>
      <g fill="none" stroke-linecap="round" stroke-linejoin="round">
        <path d="M1356 988h-46M1325 973l-17 15 17 15" stroke="#6d6e69" stroke-width="13"/><path d="M1356 988h-46M1325 973l-17 15 17 15" stroke="#a0a19d" stroke-width="9"/>
        <path d="M1450 1080v42" stroke="#9a9a98" stroke-width="7" stroke-opacity=".75"/><path d="M1433 1110l17 16 17-16" stroke="#46649a" stroke-width="12" stroke-opacity=".7"/><path d="M1433 1110l17 16 17-16" stroke="#829fd0" stroke-width="8"/>
      </g>
      <circle cx="1448" cy="987" r="11" fill="#9d9e9a" stroke="#6d6e69" stroke-width="3"/><path d="M1447 976v22" stroke="#777" stroke-width="2"/>
      <rect x="1377" y="1016" width="38" height="38" rx="6" fill="#9c9c99" stroke="#6d6e69" stroke-width="3"/>

      <!-- view cube -->
      <ellipse cx="2755" cy="411" rx="72" ry="6" fill="#000" fill-opacity=".5" filter="url(#soft)"/>
      <rect x="2701" y="303" width="105" height="104" fill="url(#cube)" stroke="#b5b5b5" stroke-width="2"/>
      <rect x="2720" y="322" width="66" height="66" fill="#c8ccd6" fill-opacity=".4"/>
      <path d="M2684 408l18-1h105v5h-123z" fill="#e25c5c"/><path d="M2806 410V302l2-16 2 16v108z" fill="#7dff7d"/>
      <text x="2754" y="364" text-anchor="middle" class="font-['Lato',sans-serif] font-bold text-2xl" fill="#999ca3">BACK</text>
      <text x="2807" y="279" text-anchor="middle" class="font-['Lato',sans-serif] font-bold text-[28px]" fill="#a4ffa4">Y</text>
      <text x="2667" y="419" text-anchor="middle" class="font-['Lato',sans-serif] font-bold text-[28px]" fill="#ff9c9c">X</text>
    </svg>

    <!-- browser -->
    <div class="absolute left-2 top-2 w-[599px] h-[49px] bg-[#f1f1f1] border-2 border-l border-t border-[#c8c8c8] flex items-center pl-2">
      <button aria-label="Collapse browser"><svg class="w-5 h-3" viewBox="0 0 20 12"><path d="M10 0v12L0 6zM20 0v12L10 6z" fill="#333"/></svg></button>
      <h2 class="ml-5 flex-1 text-[#666]">BROWSER</h2>
      <button aria-label="Hide browser"><svg class="w-4 h-4" viewBox="0 0 16 16"><rect width="16" height="16" rx="6" fill="#333"/><path d="M2 8h12" stroke="#bbb" stroke-width="2"/></svg></button>
      <svg class="w-2 h-[22px] ml-3.5" viewBox="0 0 8 22"><path d="M1 0v22M6 4v14" stroke="#777" stroke-width="2"/></svg>
    </div>

    <ul class="absolute left-0 top-[68px] flex flex-col gap-2 *:flex *:items-center *:h-10">
      <li class="pl-[46px]">
        <svg class="w-4 h-4 mr-5"><use href="#open"/></svg>
        <span class="h-10 pl-1.5 pr-[15px] bg-[#f1f1f1] flex items-center">
          <svg class="w-8 h-6 mr-3"><use href="#eye"/></svg>
          <span class="h-8 pl-1.5 pr-5 bg-[#989898] text-white text-[23px] font-bold flex items-center"><svg class="w-8 h-8 mr-7" viewBox="0 0 32 32"><path d="M3 9l6-7h19v20l-5 7H3z" fill="#fff" stroke="#333a48" stroke-width="1.500"/><path d="M3 9h20v20H3z" fill="url(#steel)"/><path d="M23 9l5-7v20l-5 7z" fill="#a9afbf"/></svg>honeycomb 2.0 v6</span>
          <input type="radio" name="active" aria-label="Activate honeycomb" checked class="appearance-none ml-2 w-7 h-7 rounded-full border border-[#333a48] bg-radial from-[#222b3c] from-30% to-[#cfd5e4] to-35%" />
        </span>
      </li>
      <li class="pl-[82px]"><svg class="w-4 h-[22px] mr-5"><use href="#closed"/></svg><span class="h-10 pl-1.5 pr-5 bg-[#f1f1f1] flex items-center"><svg class="w-8 h-8 mr-7 text-[#999]"><use href="#gear"/></svg>Document Settings</span></li>
      <li class="pl-[82px]"><svg class="w-4 h-[22px] mr-5"><use href="#closed"/></svg><span class="h-10 pl-1.5 pr-5 bg-[#f1f1f1] flex items-center"><svg class="w-8 h-8 mr-7"><use href="#folder"/></svg>Named Views</span></li>
      <li class="pl-[82px]"><svg class="w-4 h-[22px] mr-5"><use href="#closed"/></svg><span class="h-10 pl-1.5 pr-[18px] bg-[#f1f1f1] flex items-center"><svg class="w-8 h-8 mr-[18px]"><use href="#eye-off"/></svg><svg class="w-8 h-8 mr-7"><use href="#folder"/></svg>Origin</span></li>
      <li class="pl-[82px]"><svg class="w-4 h-4 mr-5"><use href="#open"/></svg><span class="relative h-10 pl-1.5 pr-5 bg-[#f1f1f1] flex items-center"><svg class="w-8 h-6 mr-[18px]"><use href="#eye"/></svg><svg class="w-8 h-8 mr-7"><use href="#folder"/></svg>Bodies
        <svg class="absolute left-12 bottom-[3px] w-[156px] h-2" viewBox="0 0 156 8"><path d="M1 8l5-8M13 8l5-8M25 8l5-8M37 8l5-8M49 8l5-8M61 8l5-8M73 8l5-8M85 8l5-8M97 8l5-8M109 8l5-8M121 8l5-8M133 8l5-8M145 8l5-8" stroke="#7b8fb5" stroke-width="4"/></svg></span></li>
      <li class="pl-[154px]"><span class="h-10 pl-1.5 pr-[18px] bg-[#f1f1f1] flex items-center"><svg class="w-8 h-8 mr-[18px]"><use href="#eye-off"/></svg><svg class="w-8 h-8 mr-7"><use href="#cylinder"/></svg>Body1</span></li>
      <li class="pl-[154px]"><span class="h-10 pl-1.5 pr-[18px] bg-[#f1f1f1] flex items-center"><svg class="w-8 h-8 mr-[18px]"><use href="#eye-off"/></svg><svg class="w-8 h-8 mr-7"><use href="#cylinder"/></svg>Body2</span></li>
      <li class="pl-[154px]"><span class="h-10 pl-1.5 pr-[18px] bg-[#f1f1f1] flex items-center"><svg class="w-8 h-6 mr-[18px]"><use href="#eye"/></svg><svg class="w-8 h-8 mr-7"><use href="#cylinder"/></svg>Body3</span></li>
      <li class="pl-[154px]"><span class="h-10 pl-1.5 bg-[#f1f1f1] flex items-center"><svg class="w-8 h-6 mr-3"><use href="#eye"/></svg><span class="h-10 pl-1.5 pr-5 bg-[#0696d7] text-white text-[23px] font-bold flex items-center"><svg class="w-8 h-8 mr-7"><use href="#cylinder"/></svg>Body4</span></span></li>
      <li class="pl-[82px]"><svg class="w-4 h-4 mr-5"><use href="#open"/></svg><span class="h-10 pl-1.5 pr-5 bg-[#f1f1f1] flex items-center"><svg class="w-8 h-6 mr-[18px]"><use href="#eye"/></svg><svg class="w-8 h-8 mr-7"><use href="#folder"/></svg>Sketches</span></li>
      <li class="pl-[154px]"><span class="h-10 pl-1.5 pr-6 bg-[#f1f1f1] flex items-center"><svg class="w-8 h-8 mr-[18px]"><use href="#eye-off"/></svg><svg class="w-8 h-8 mr-7"><use href="#sketch"/></svg>Sketch1</span></li>
      <li class="pl-[154px]"><span class="h-10 pl-1.5 pr-6 bg-[#f1f1f1] flex items-center shadow-[0_8px_0_rgb(255_255_255/0.12)]"><svg class="w-8 h-8 mr-[18px]"><use href="#eye-off"/></svg><svg class="w-8 h-8 mr-7"><use href="#sketch"/></svg>Sketch2</span></li>
      <li class="pl-[154px]"><span class="h-10 pl-1.5 pr-6 bg-[#f1f1f1] flex items-center shadow-[0_8px_0_rgb(255_255_255/0.12)]"><svg class="w-8 h-6 mr-[18px]"><use href="#eye"/></svg><svg class="w-8 h-8 mr-7"><use href="#sketch"/></svg>Sketch5</span></li>
      <li class="pl-[154px]"><span class="h-10 pl-1.5 pr-6 bg-[#f1f1f1] flex items-center shadow-[0_8px_0_rgb(255_255_255/0.12)]"><svg class="w-8 h-8 mr-[18px]"><use href="#eye-off"/></svg><svg class="w-8 h-8 mr-7"><use href="#sketch"/></svg>Sketch6</span></li>
    </ul>

    <!-- move/copy dialog -->
    <form class="absolute right-2 top-[248px] w-[500px] bg-[#f1f1f1] border-2 border-[#c8c8c8]">
      <div class="h-[47px] flex items-center pl-0.5 pr-2 border-b-2 border-[#c8c8c8]">
        <svg class="w-2 h-[22px]" viewBox="0 0 8 22"><path d="M1 4v14M5 0v22" stroke="#777" stroke-width="2"/></svg>
        <button type="button" aria-label="Minimize" class="ml-3"><svg class="w-[18px] h-[18px]" viewBox="0 0 18 18"><circle cx="9" cy="9" r="9" fill="#333"/><path d="M4 9h10" stroke="#fff" stroke-width="2"/></svg></button>
        <h2 class="ml-2 flex-1 pb-0.5 text-[#666]">MOVE/COPY</h2>
        <button type="button" aria-label="Dock"><svg class="w-5 h-3" viewBox="0 0 20 12"><path d="M0 0v12l10-6zM10 0v12l10-6z" fill="#333"/></svg></button>
      </div>
      <div class="pl-6 pb-0.5 *:h-[60px] *:flex *:items-center">
        <div>
          <label for="obj" class="w-[159px]">Move Object</label>
          <div class="relative w-[250px]">
            <select id="obj" class="appearance-none w-full h-[54px] bg-white border-2 border-[#c8c8c8] pl-[45px] rounded-none"><option>Bodies...</option></select>
            <svg class="absolute left-1.5 top-[11px] w-8 h-8"><use href="#cylinder"/></svg>
            <svg class="absolute right-2.5 top-[22px] w-3 h-2.5 pointer-events-none"><use href="#caret"/></svg>
          </div>
        </div>
        <div>
          <span class="w-[159px]">Selection</span>
          <button type="button" class="h-[54px] pl-3 pr-3.5 bg-[#0696d7] text-white flex items-center gap-3 rounded-xs"><svg class="w-5 h-[30px]" viewBox="0 0 20 30"><path d="M2 2v22l5-5 4 9 5-2-4-9h7z" fill="url(#steel)" stroke="#333a48" stroke-width="1.200"/></svg>1 selected</button>
          <button type="button" aria-label="Clear selection" class="ml-[22px]"><svg class="w-[18px] h-[18px]" viewBox="0 0 18 18"><path d="M2 2l14 14M16 2L2 16" stroke="#606060" stroke-width="4"/></svg></button>
        </div>
        <div>
          <span class="w-[159px]">Move Type</span>
          <div class="flex gap-3">
            <button type="button" aria-label="Free move" class="w-[46px] h-[54px] bg-[#0696d7] rounded-xs flex items-center justify-center"><svg class="w-7 h-7" viewBox="0 0 28 28"><circle cx="12" cy="16" r="6" fill="none" stroke="#000" stroke-width="1.500"/><path d="M12 6v10h10M12 16l-7 7" fill="none" stroke="#000" stroke-width="1.500"/><path d="M12 1l3 5H9zM27 16l-5-3v6zM2 26v-6l6 6z"/></svg></button>
            <button type="button" aria-label="Translate" class="w-[46px] h-[54px] flex items-center justify-center"><svg class="w-7 h-7" viewBox="0 0 28 28"><path d="M12 6v10h10M12 16l-7 7" fill="none" stroke="#000" stroke-width="1.500"/><path d="M12 1l3 5H9zM27 16l-5-3v6zM2 26v-6l6 6z"/></svg></button>
            <button type="button" aria-label="Rotate" class="w-[46px] h-[54px] flex items-center justify-center"><svg class="w-7 h-7" viewBox="0 0 28 28"><path d="M22 7A10.500 10.500 0 1 0 23 18" fill="none" stroke="#222" stroke-width="1.500"/><path d="M24 3v7h-7z"/></svg></button>
            <button type="button" aria-label="Point to point" class="w-[46px] h-[54px] flex items-center justify-center"><svg class="w-7 h-7" viewBox="0 0 28 28"><circle cx="25" cy="3" r="2.300" fill="#fff" stroke="#000" stroke-width="1.200"/><circle cx="3" cy="25" r="2.300" fill="#fff" stroke="#000" stroke-width="1.200"/><path d="M20 8l-8 8" stroke="#000" stroke-width="1.500"/><path d="M8 20v-7l7 7z"/></svg></button>
            <button type="button" aria-label="Point to position" class="w-[46px] h-[54px] flex items-center justify-center"><svg class="w-7 h-7" viewBox="0 0 28 28"><circle cx="25" cy="3" r="2.300" fill="#fff" stroke="#000" stroke-width="1.200"/><path d="M21 7l-6 6" stroke="#000" stroke-width="1.500"/><path d="M12 16v-6l6 6z"/><path d="M5 23V17" stroke="#27b80c" stroke-width="1.500"/><path d="M5 14l3 4H2z" fill="#27b80c"/><path d="M5 23h6" stroke="#e01818" stroke-width="1.500"/><path d="M14 23l-4-3v6z" fill="#e01818"/><path d="M5 23l-3 3" stroke="#0b5cb8" stroke-width="1.500"/><path d="M0 28v-5l5 5z" fill="#0b5cb8"/></svg></button>
          </div>
        </div>
        <div>
          <span class="w-[159px]">Set Pivot</span>
          <button type="button" aria-label="Set pivot" class="ml-2"><svg class="w-[30px] h-[30px]" viewBox="0 0 30 30"><path d="M3 27V5" stroke="#0b5cb8" stroke-width="1.500"/><path d="M3 1l3 5H0z" fill="#0b5cb8"/><path d="M3 27h20" stroke="#e01818" stroke-width="1.500"/><path d="M28 27l-5-3v6z" fill="#e01818"/><path d="M3 27l15-15" stroke="#3cc01e" stroke-width="1.500"/><path d="M22 0l3 4h-6zM22 15l3-4h-6zM14 8l4-3v6zM30 8l-4-3v6z"/><path d="M22 3v3M22 9v3M17 8h3M24 8h3" stroke="#000"/></svg></button>
        </div>
        <div><label for="xd" class="w-[160px]">X Distance</label><input id="xd" type="text" value="0.00 mm" class="w-[248px] h-[52px] bg-white border-2 border-[#c8c8c8] px-1" /></div>
        <div><label for="yd" class="w-[160px]">Y Distance</label><input id="yd" type="text" value="−2" class="w-[248px] h-[52px] bg-white border-2 border-[#c8c8c8] px-1" /></div>
        <div><label for="zd" class="w-[160px]">Z Distance</label><input id="zd" type="text" value="0.00 mm" class="w-[248px] h-[52px] bg-white border-2 border-[#c8c8c8] px-1" /></div>
        <div><label for="xa" class="w-[160px]">X Angle</label><input id="xa" type="text" value="0.0 deg" class="w-[248px] h-[52px] bg-white border-2 border-[#c8c8c8] px-1" /></div>
        <div><label for="ya" class="w-[160px]">Y Angle</label><input id="ya" type="text" value="0.0 deg" class="w-[248px] h-[52px] bg-white border-2 border-[#c8c8c8] px-1" /></div>
        <div><label for="za" class="w-[160px]">Z Angle</label><input id="za" type="text" value="0.0 deg" class="w-[248px] h-[52px] bg-white border-2 border-[#c8c8c8] px-1" /></div>
        <div><label for="copy" class="w-[169px] text-[#b3b3b3]">Create Copy</label><input id="copy" type="checkbox" disabled class="appearance-none w-[26px] h-[26px] border-2 border-[#aaa] rounded-md bg-linear-to-b from-[#f4f4f4] to-[#dedede]" /></div>
      </div>
      <div class="h-[72px] border-t-2 border-[#c8c8c8] flex items-center pl-4 pr-2.5 gap-3">
        <svg class="w-6 h-6 mr-auto" viewBox="0 0 24 24"><circle cx="12" cy="12" r="12"/><path d="M10 5h4v4h-4zM9 10h5v7h2v2H8v-2h2v-5H9z" fill="#fff"/></svg>
        <button type="button" class="w-[120px] h-[38px] border-2 border-[#999] bg-linear-to-b from-[#6496cd] to-[#3b6799] text-white">OK</button>
        <button type="button" class="w-[120px] h-[38px] border-2 border-[#b5b5b5] bg-[#e8e8e8] text-[#666]">Cancel</button>
      </div>
    </form>

    <!-- comments -->
    <div class="absolute left-2 bottom-2.5 w-[599px] h-[49px] bg-[#f1f1f1] border-2 border-l border-t border-[#c8c8c8] border-t-[#e4e4e4] flex items-center pl-12">
      <h2 class="flex-1 text-[#666]">COMMENTS</h2>
      <button aria-label="Show comments"><svg class="w-4 h-4" viewBox="0 0 16 16"><rect width="16" height="16" rx="6" fill="#333"/><path d="M2 8h12M8 2v12" stroke="#bbb" stroke-width="2"/></svg></button>
      <svg class="w-2 h-[22px] ml-3.5" viewBox="0 0 8 22"><path d="M1 0v22M6 4v14" stroke="#777" stroke-width="2"/></svg>
    </div>

    <!-- navigation bar -->
    <div class="absolute left-1/2 -translate-x-1/2 bottom-3 h-12 bg-[#f1f1f1] flex items-center pl-2 pr-1.5 text-[#333]">
      <button aria-label="Orbit" class="flex items-center gap-2.5"><svg class="w-8 h-8" viewBox="0 0 32 32"><g fill="none" stroke="#333a48" stroke-width="1.500"><path d="M20 8C19 4 18 1 15 1c-8 0-8 30 0 30 3 0 5-4 6-8"/><path d="M7 11c-10 3-6 10 6 11h8c12-2 12-7 6-10"/></g><path d="M18 6h6v5zM22 10h6l-4 5z" fill="#222"/><path d="M16 12v7M12 15.500h8" stroke="#1b8fe8" stroke-width="2"/></svg><svg class="w-3 h-2.5"><use href="#caret"/></svg></button>
      <button aria-label="Look at" class="ml-3"><svg class="w-8 h-8" viewBox="0 0 32 32"><path d="M4 10l9-8-1 5 10-3v7z" fill="url(#steelDark)" stroke="#333a48"/><path d="M2 11h27v19H2z" fill="#f4f5f8" stroke="#333a48" stroke-width="1.500"/><path d="M6 15h19v10H6z" fill="url(#steelDark)" stroke="#333a48" stroke-width="1.500"/></svg></button>
      <button aria-label="Pan" class="ml-5"><svg class="w-8 h-8" viewBox="0 0 32 32"><path d="M11 31q-2-6-6-9l-4-6q1-3 4-1l5 5-3-13q0-4 3-3l5 10-1-12q2-3 4 0l1 12 3-11q3-3 4 1l-2 12 4-7q4-2 3 2l-5 12-2 8z" fill="#fbfbfc" stroke="#333a48" stroke-width="1.500" stroke-linejoin="round"/></svg></button>
      <button aria-label="Zoom" class="ml-5"><svg class="w-8 h-8" viewBox="0 0 32 32"><path d="M20 20l9 9" stroke="#2b2f38" stroke-width="5"/><circle cx="12" cy="12" r="10.500" fill="#e6f2f4" stroke="#444b58" stroke-width="1.500"/><path d="M5 11q2-6 7-6" fill="none" stroke="#fff" stroke-width="2"/><path d="M27 2v8M24 6h7M24 11h7" stroke="#333" stroke-width="1.500"/></svg></button>
      <button aria-label="Fit" class="ml-5 flex items-center gap-2.5"><svg class="w-8 h-8" viewBox="0 0 32 32"><path d="M1 2h29v28H1z" fill="none" stroke="#666" stroke-width="1.500" stroke-dasharray="6 3"/><path d="M20 20l9 9" stroke="#2b2f38" stroke-width="5"/><circle cx="12" cy="12" r="10.500" fill="#e6f2f4" stroke="#444b58" stroke-width="1.500"/></svg><svg class="w-3 h-2.5"><use href="#caret"/></svg></button>
      <button aria-label="Display settings" class="ml-3 flex items-center gap-1"><svg class="w-8 h-8" viewBox="0 0 32 32"><path d="M1 1h30v24H1z" fill="#f4f5f8" stroke="#333a48" stroke-width="1.500"/><path d="M4 4h24v18H4z" fill="#93b5e0" stroke="#2b4a80"/><path d="M13 25h6v3l4 2v1H9v-1l4-2z" fill="#c9ccd6" stroke="#555b68"/></svg><svg class="w-3 h-2.5"><use href="#caret"/></svg></button>
      <button aria-label="Grid and snaps" class="ml-3.5 flex items-center gap-1"><svg class="w-8 h-8" viewBox="0 0 32 32"><path d="M2 2h28v28H2z" fill="url(#gridFade)" stroke="#333" stroke-width="1.500"/><path d="M6 2v28M10 2v28M14 2v28M18 2v28M22 2v28M26 2v28M2 6h28M2 10h28M2 14h28M2 18h28M2 22h28M2 26h28" stroke="#555"/></svg><svg class="w-3 h-2.5"><use href="#caret"/></svg></button>
      <button aria-label="Viewports" class="ml-3.5 flex items-center gap-1"><svg class="w-8 h-8" viewBox="0 0 32 32"><path d="M2 4h28v24H2z" fill="#a9c4e8" stroke="#2b4a80" stroke-width="1.500"/><path d="M16 4v24M2 16h28" stroke="#2b4a80" stroke-width="1.500"/><path d="M4 6h9v8H4zM19 6h9v8h-9zM4 18h9v8H4zM19 18h9v8h-9z" fill="#93b5e0" stroke="#5d81b8"/></svg><svg class="w-3 h-2.5"><use href="#caret"/></svg></button>
    </div>
    <p class="absolute right-[66px] bottom-3.5 font-bold text-black">Body4</p>
  </main>

  <!-- timeline -->
  <footer class="h-[100px] shrink-0 bg-[#f1f1f1] border-t-2 border-[#c8c8c8] flex pl-[18px] pr-[26px]">
    <div class="h-24 flex items-center gap-[18px] text-[#505050]">
      <button aria-label="Go to start"><svg class="w-8 h-8" viewBox="0 0 32 32"><path d="M4 2h4v28H4zM28 2v28L9 16z" fill="currentColor"/></svg></button>
      <button aria-label="Step back"><svg class="w-8 h-8" viewBox="0 0 32 32"><path d="M22 2v28L3 16zM24 10h4v12h-4z" fill="currentColor"/></svg></button>
      <button aria-label="Play"><svg class="w-8 h-8" viewBox="0 0 32 32"><path d="M4 0v32l24-16z" fill="currentColor"/></svg></button>
      <button aria-label="Step forward"><svg class="w-8 h-8" viewBox="0 0 32 32"><path d="M8 2v28l19-14zM3 10h4v12H3z" fill="currentColor"/></svg></button>
      <button aria-label="Go to end"><svg class="w-8 h-8" viewBox="0 0 32 32"><path d="M4 2v28l19-14zM24 2h4v28h-4z" fill="currentColor"/></svg></button>
    </div>
    <div class="relative ml-[42px] pt-[30px]">
      <div class="flex gap-4">
        <svg class="w-8 h-[34px]"><use href="#sketch"/></svg>
        <svg class="w-8 h-8"><use href="#extrude"/></svg>
        <svg class="w-8 h-8"><use href="#fillet"/></svg>
        <svg class="w-8 h-[34px]"><use href="#sketch"/></svg>
        <svg class="w-8 h-8"><use href="#extrude"/></svg>
        <svg class="w-8 h-8 text-[#222]"><use href="#move"/></svg>
        <svg class="w-8 h-8"><use href="#fillet"/></svg>
        <svg class="w-8 h-[34px]"><use href="#sketch"/></svg>
        <svg class="w-8 h-8"><use href="#extrude"/></svg>
        <svg class="w-8 h-[34px]"><use href="#sketch"/></svg>
        <svg class="w-8 h-8"><use href="#extrude"/></svg>
      </div>
      <svg class="ml-4 mt-1 w-[482px] h-3.5" viewBox="0 0 482 14"><path d="M2 0v12h478V0M48 0v12M96 0v12M144 0v12M192 0v12M240 0v12M288 0v12M336 0v12M384 0v12M432 0v12" fill="none" stroke="#ccc" stroke-width="4"/></svg>
      <svg class="absolute left-[480px] top-2 w-[54px] h-[76px]" viewBox="0 0 54 76"><path d="M2 14l6-10M12 14l6-10M22 14l6-10" stroke="#444" stroke-width="4"/><path d="M28 10h24v8L42 30H38L28 18z" fill="#666"/><path d="M40 20v54" stroke="#666" stroke-width="4"/></svg>
    </div>
    <button aria-label="Preferences" class="ml-auto h-24 text-[#888]"><svg class="w-8 h-8"><use href="#gear"/></svg></button>
  </footer>
</body>
</html>
